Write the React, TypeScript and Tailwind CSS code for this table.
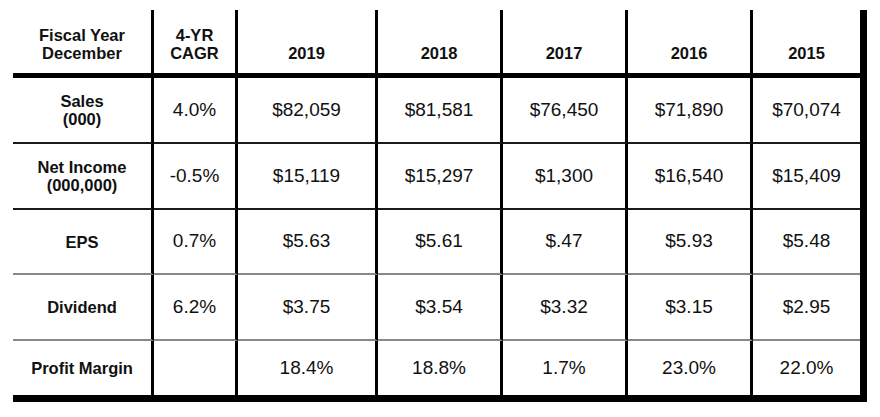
import React from "react";

const cols = ["w-[141px]", "w-[84px]", "w-[140px]", "w-[125px]", "w-[125px]", "w-[125px]", "w-[107px]"];

const header = [
  ["Fiscal Year", "December"],
  ["4-YR", "CAGR"],
  ["2019"],
  ["2018"],
  ["2017"],
  ["2016"],
  ["2015"],
];

type Row = { label: string[]; values: string[]; h: string; border: string };

const rows: Row[] = [
  { label: ["Sales", "(000)"], values: ["4.0%", "$82,059", "$81,581", "$76,450", "$71,890", "$70,074"], h: "h-[66px]", border: "border-b-2 border-b-[#1a1a1a]" },
  { label: ["Net Income", "(000,000)"], values: ["-0.5%", "$15,119", "$15,297", "$1,300", "$16,540", "$15,409"], h: "h-[66px]", border: "border-b-2 border-b-[#1a1a1a]" },
  { label: ["EPS"], values: ["0.7%", "$5.63", "$5.61", "$.47", "$5.93", "$5.48"], h: "h-[65px]", border: "border-b-2 border-b-[#888888]" },
  { label: ["Dividend"], values: ["6.2%", "$3.75", "$3.54", "$3.32", "$3.15", "$2.95"], h: "h-[66px]", border: "border-b-2 border-b-[#888888]" },
  { label: ["Profit Margin"], values: ["", "18.4%", "18.8%", "1.7%", "23.0%", "22.0%"], h: "h-[54px]", border: "" },
];

export default function App() {
  return (
    <div className="w-[880px] h-[417px] bg-white pt-[10px] pl-[13px]" style={{ fontFamily: '"Liberation Sans", Arial, sans-serif' }}>
      <div className="flex flex-col w-[854px] border-r-[7px] border-b-[7px] border-black text-[#111]">
        <div className="flex h-[68px]">
          {header.map((lines, i) => (
            <div
              key={i}
              className={`${cols[i]} ${i < 6 ? "border-r-[3px] border-r-black" : ""} border-b-[5px] border-b-black flex flex-col items-center justify-end pb-[11px] text-[16.5px] leading-[18px] font-bold`}
            >
              {lines.map((l) => (
                <span key={l}>{l}</span>
              ))}
            </div>
          ))}
        </div>
        {rows.map((r, ri) => (
          <div key={ri} className={`flex ${r.h}`}>
            <div className={`${cols[0]} border-r-[3px] border-r-black ${r.border} flex flex-col items-center justify-center text-[16.5px] leading-[18px] font-bold`}>
              {r.label.map((l) => (
                <span key={l}>{l}</span>
              ))}
            </div>
            {r.values.map((v, vi) => (
              <div
                key={vi}
                className={`${cols[vi + 1]} ${vi < 5 ? "border-r-[3px] border-r-black" : ""} ${r.border} flex items-center justify-center text-[19px]`}
              >
                {v}
              </div>
            ))}
          </div>
        ))}
      </div>
    </div>
  );
}
